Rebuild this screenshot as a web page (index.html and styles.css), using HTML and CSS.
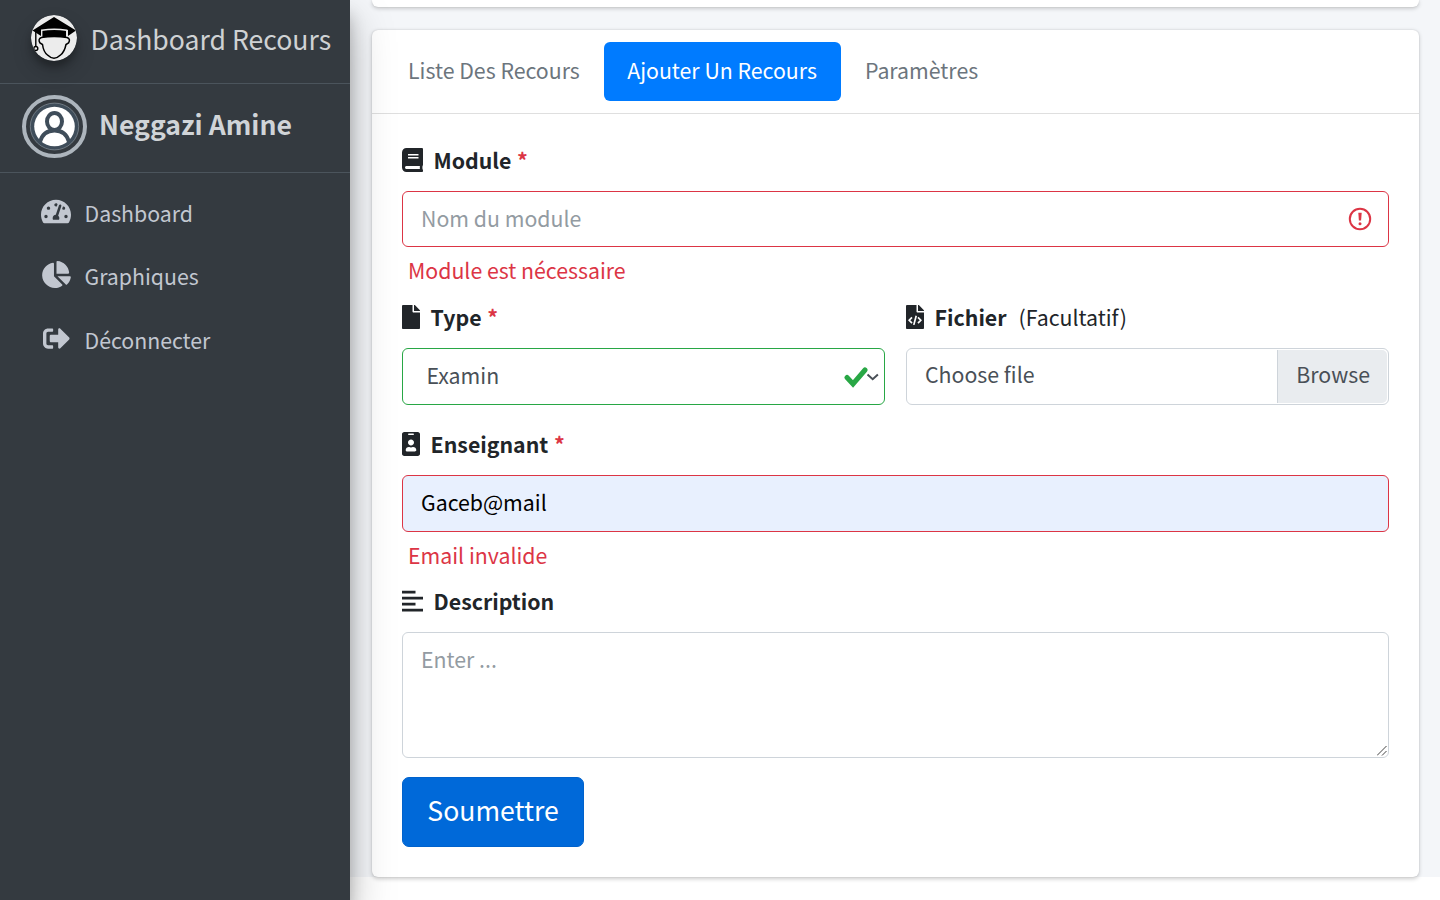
FILE: index.html
```html
<!DOCTYPE html>
<html lang="fr">
<head>
<meta charset="utf-8">
<title>Dashboard Recours</title>
<link rel="stylesheet" href="styles.css">
</head>
<body>
<aside class="sidebar">
  <a class="brand">
    <svg class="brand-logo" viewBox="0 0 46 46">
      <defs><clipPath id="disc"><circle cx="23" cy="23" r="23"/></clipPath></defs>
      <circle cx="23" cy="23" r="23" fill="#ececec"/>
      <g clip-path="url(#disc)">
        <path d="M1.500 15.500L23 2l22 13.500-8 5.500V15H10v6z" fill="#000"/>
        <path d="M10.700 22.500v-7.300q12.500-2 25 0v7.300" fill="#000" stroke="#ececec" stroke-width="1.400"/>
        <path d="M4.800 17v14" fill="none" stroke="#000" stroke-width="1.400"/>
        <circle cx="4.800" cy="33.500" r="2" fill="none" stroke="#000" stroke-width="1.400"/>
        <path d="M10.500 22.500Q6.500 24 9 28l2.500 1.500Q12.500 37 16.500 40q3.500 3.300 6.500 3.300t6.500-3.300q4-3 5.500-10.500l2.500-1.500q2.500-4-1.500-5.500Q23 20.500 10.500 22.500z" fill="#ececec" stroke="#000" stroke-width="1.500"/>
      </g>
    </svg>
    <span class="brand-text">Dashboard Recours</span>
  </a>
  <div class="user">
    <svg class="avatar" viewBox="0 0 65 63">
      <ellipse cx="32.500" cy="31.500" rx="30.500" ry="29.500" fill="none" stroke="#adb5bd" stroke-width="4"/>
      <ellipse cx="32.500" cy="31.500" rx="24.200" ry="23.400" fill="#3f4d5a" stroke="#87909a" stroke-width=".7"/>
      <ellipse cx="32.500" cy="31.500" rx="20.300" ry="19.700" fill="#fff"/>
      <path d="M18 47q3-11.500 14.500-11.500T47 47" fill="none" stroke="#3f4d5a" stroke-width="3.800"/>
      <ellipse cx="32.500" cy="26.500" rx="7.500" ry="8.500" fill="#fff" stroke="#3f4d5a" stroke-width="4"/>
    </svg>
    <span class="user-name">Neggazi Amine</span>
  </div>
  <nav class="menu">
    <a class="menu-item"><span class="menu-icon"><svg width="30" height="27" viewBox="0 0 576 512"><path d="M288 32C128.940 32 0 160.940 0 320c0 52.800 14.250 102.260 39.060 144.800 5.610 9.620 16.300 15.200 27.440 15.200h443c11.140 0 21.830-5.580 27.440-15.200C561.750 422.260 576 372.800 576 320c0-159.060-128.940-288-288-288zm0 64c14.710 0 26.580 10.130 30.320 23.650-1.110 2.260-2.640 4.230-3.450 6.670l-9.220 27.670c-5.130 3.490-10.970 6.010-17.640 6.010-17.670 0-32-14.330-32-32S270.330 96 288 96zM96 384c-17.670 0-32-14.330-32-32s14.330-32 32-32 32 14.330 32 32-14.330 32-32 32zm48-160c-17.670 0-32-14.330-32-32s14.330-32 32-32 32 14.330 32 32-14.330 32-32 32zm246.770-72.410l-61.330 184C343.130 347.330 352 364.540 352 384c0 11.720-3.380 22.550-8.880 32H232.880c-5.500-9.450-8.880-20.280-8.880-32 0-33.940 26.500-61.430 59.900-63.590l61.340-184.010c4.170-12.560 17.730-19.450 30.360-15.170 12.570 4.190 19.350 17.790 15.170 30.360zm14.660 57.200l15.520-46.550c3.470-1.290 7.130-2.230 11.050-2.230 17.670 0 32 14.330 32 32s-14.330 32-32 32c-11.380-.01-20.890-6.280-26.570-15.220zM480 384c-17.670 0-32-14.330-32-32s14.330-32 32-32 32 14.330 32 32-14.330 32-32 32z"/></svg></span>Dashboard</a>
    <a class="menu-item"><span class="menu-icon"><svg width="29" height="27" viewBox="0 0 544 512"><path d="M527.790 288H290.500l158.030 158.030c6.040 6.040 15.980 6.530 22.190.68 38.700-36.460 65.320-85.610 73.130-140.860 1.340-9.460-6.510-17.850-16.060-17.850zm-15.830-64.800C503.720 103.740 408.260 8.280 288.800.04 279.680-.59 272 7.100 272 16.240V240h223.770c9.140 0 16.820-7.680 16.190-16.800zM224 288V50.710c0-9.550-8.390-17.400-17.840-16.060C86.990 51.490-4.100 155.600.14 280.370 4.500 408.510 114.830 513.590 243.030 511.980c50.400-.63 96.970-16.870 135.260-44.030 7.900-5.600 8.420-17.230 1.570-24.080L224 288z"/></svg></span>Graphiques</a>
    <a class="menu-item"><span class="menu-icon"><svg width="27" height="27" viewBox="0 0 512 512"><path d="M497 273L329 441c-15 15-41 4.500-41-17v-96H152c-13.300 0-24-10.700-24-24v-96c0-13.300 10.700-24 24-24h136V88c0-21.400 25.900-32 41-17l168 168c9.300 9.400 9.300 24.600 0 34zM192 436v-40c0-6.600-5.400-12-12-12H96c-17.700 0-32-14.300-32-32V160c0-17.700 14.300-32 32-32h84c6.600 0 12-5.400 12-12V76c0-6.600-5.400-12-12-12H96c-53 0-96 43-96 96v192c0 53 43 96 96 96h84c6.600 0 12-5.400 12-12z"/></svg></span>Déconnecter</a>
  </nav>
</aside>
<main class="content">
  <section class="card card-previous"></section>
  <section class="card card-main">
    <nav class="tabs">
      <a class="tab">Liste Des Recours</a>
      <a class="tab tab-active">Ajouter Un Recours</a>
      <a class="tab">Paramètres</a>
    </nav>
    <form class="form">
      <label class="label"><svg class="i-wide" viewBox="0 0 448 512"><path d="M448 360V24c0-13.300-10.700-24-24-24H96C43 0 0 43 0 96v320c0 53 43 96 96 96h328c13.300 0 24-10.700 24-24v-16c0-7.500-3.500-14.300-8.900-18.700-4.200-15.400-4.200-59.300 0-74.700 5.400-4.300 8.900-11.100 8.900-18.600zM128 134c0-3.300 2.700-6 6-6h212c3.300 0 6 2.700 6 6v20c0 3.300-2.700 6-6 6H134c-3.300 0-6-2.700-6-6v-20zm0 64c0-3.300 2.700-6 6-6h212c3.300 0 6 2.700 6 6v20c0 3.300-2.700 6-6 6H134c-3.300 0-6-2.700-6-6v-20zm253.400 250H96c-17.700 0-32-14.300-32-32 0-17.600 14.400-32 32-32h285.400c-1.900 17.100-1.900 46.900 0 64z"/></svg><b>Module</b><b class="star">*</b></label>
      <div class="control invalid control-module">
        <input class="field" type="text" placeholder="Nom du module">
        <svg class="alert" viewBox="0 0 24 24"><circle cx="12" cy="12" r="10.200" fill="none" stroke="#dc3545" stroke-width="2"/><path d="M10.300 5.800h3.400l-.6 7.600h-2.200z" fill="#dc3545"/><circle cx="12" cy="16.700" r="1.500" fill="#dc3545"/></svg>
      </div>
      <p class="error">Module est nécessaire</p>
      <div class="row">
        <div class="col">
          <label class="label"><svg class="i-slim" viewBox="0 0 384 512"><path d="M224 136V0H24C10.700 0 0 10.700 0 24v464c0 13.300 10.700 24 24 24h336c13.300 0 24-10.700 24-24V160H248c-13.200 0-24-10.800-24-24zm160-14.100v6.100H256V0h6.100c6.400 0 12.500 2.500 17 7l97.900 98c4.500 4.500 7 10.600 7 16.900z"/></svg><b>Type</b><b class="star">*</b></label>
          <div class="control valid select">
            <span class="select-value">Examin</span>
            <svg class="marks" viewBox="0 0 36 24"><path d="M3 12.500l6 6.500L21 5" fill="none" stroke="#28a745" stroke-width="5" stroke-linecap="round"/><path d="M23.500 9.500l5.200 4.700 5.200-4.700" fill="none" stroke="#495057" stroke-width="2"/></svg>
          </div>
        </div>
        <div class="col">
          <label class="label"><svg class="i-slim" viewBox="0 0 384 512"><path d="M224 136V0H24C10.700 0 0 10.700 0 24v464c0 13.300 10.700 24 24 24h336c13.300 0 24-10.700 24-24V160H248c-13.200 0-24-10.800-24-24zm160-14.100v6.100H256V0h6.100c6.400 0 12.500 2.500 17 7l97.900 98c4.500 4.500 7 10.600 7 16.900z"/><path d="M128 264l-60 62 60 62M256 264l60 62-60 62M218 228l-52 196" fill="none" stroke="#fff" stroke-width="36"/></svg><b>Fichier</b><span class="optional">(Facultatif)</span></label>
          <div class="control file"><span class="file-name">Choose file</span><span class="browse">Browse</span></div>
        </div>
      </div>
      <label class="label"><svg class="i-slim" viewBox="0 0 384 512"><path d="M336 0H48C21.500 0 0 21.500 0 48v416c0 26.500 21.500 48 48 48h288c26.500 0 48-21.500 48-48V48c0-26.500-21.500-48-48-48zM144 32h96c8.800 0 16 7.200 16 16s-7.200 16-16 16h-96c-8.800 0-16-7.200-16-16s7.200-16 16-16zm48 128c35.300 0 64 28.700 64 64s-28.700 64-64 64-64-28.700-64-64 28.700-64 64-64zm112 236.800c0 10.600-10 19.200-22.400 19.200H102.400C90 416 80 407.400 80 396.800v-19.200c0-31.800 30.100-57.600 67.200-57.600h5c12.300 5.100 25.700 8 39.800 8s27.600-2.900 39.800-8h5c37.100 0 67.200 25.800 67.200 57.600v19.200z"/></svg><b>Enseignant</b><b class="star">*</b></label>
      <div class="control invalid autofilled"><input class="field" type="text" value="Gaceb@mail"></div>
      <p class="error error-mail">Email invalide</p>
      <label class="label"><svg class="i-wide" viewBox="0 0 448 512"><path d="M0 36h288v60H0zM0 164h448v60H0zM0 292h288v60H0zM0 420h448v60H0z"/></svg><b>Description</b></label>
      <div class="description-box">
        <textarea class="description" placeholder="Enter ..."></textarea>
        <svg class="grip" viewBox="0 0 10 10"><path d="M0 9.500L9.500 0M5 9.500L9.500 5" fill="none" stroke="#444" stroke-width="1"/></svg>
      </div>
      <button class="submit" type="button">Soumettre</button>
    </form>
  </section>
</main>
</body>
</html>
```

FILE: styles.css
```css
* { box-sizing: border-box; }
body {
  margin: 0;
  height: 900px;
  overflow: hidden;
  display: flex;
  align-items: flex-start;
  background: #fff;
  color: #212529;
  font: 400 21.3px/36px "Noto Sans CJK SC", "Noto Sans", sans-serif;
}
.sidebar {
  position: relative;
  z-index: 2;
  flex: 0 0 350px;
  height: 900px;
  background: #343a40;
  color: #c2c7d0;
  box-shadow: 0 21px 42px rgba(0,0,0,.25), 0 15px 15px rgba(0,0,0,.22);
}
.brand {
  display: flex;
  align-items: center;
  height: 84px;
  padding: 0 0 7px 31px;
  border-bottom: 1px solid #4b545c;
}
.brand-logo {
  width: 46px;
  height: 46px;
  margin-right: 13.500px;
  border-radius: 50%;
  box-shadow: 0 10px 20px rgba(0,0,0,.19), 0 6px 6px rgba(0,0,0,.23);
}
.brand-text { padding-top: 1px; font-size: 26.600px; color: #cfd2d4; white-space: nowrap; }
.user {
  display: flex;
  height: 89px;
  padding: 11px 0 0 22px;
  border-bottom: 1px solid #4b545c;
}
.avatar { width: 65px; height: 63px; margin-right: 12px; }
.user-name { padding-top: 11px; font-size: 26.600px; font-weight: 700; color: #d0d4d8; white-space: nowrap; }
.menu { display: flex; flex-direction: column; gap: 3.400px; padding-top: 10px; }
.menu-item { display: flex; align-items: center; height: 60px; padding-left: 38.500px; }
.menu-icon { display: flex; justify-content: center; width: 35px; margin: -3px 11px 0 0; fill: #c2c7d0; }
.content {
  flex: 1;
  height: 877px;
  padding: 0 21px 0 22px;
  background: #f4f6f9;
}
.card { background: #fff; box-shadow: 0 0 1.500px rgba(0,0,0,.125), 0 1.500px 4px rgba(0,0,0,.2); }
.card-previous { height: 7px; margin-bottom: 23px; border-radius: 0 0 6px 6px; }
.card-main { height: 847px; border-radius: 6px; }
.tabs { display: flex; height: 84px; padding: 12px; border-bottom: 1px solid #dfdfdf; }
.tab { height: 59px; padding: 10px 24px; border-radius: 6px; color: #6c757d; white-space: nowrap; }
.tab-active { padding: 10px 24px 10px 23.400px; background: #007bff; color: #fff; }
.form { padding: 29px 30px 30px; }
.label { display: flex; align-items: center; height: 36px; margin-bottom: 12px; }
.label svg { height: 24px; margin: -2px 10.600px 0 0; fill: #212529; }
.label b, .optional { margin-top: -2px; }
.i-wide { width: 21px; }
.i-slim { width: 18px; }
.label .star { margin-left: 5.600px; color: #dc3545; }
.optional { margin-left: 12px; }
.control {
  display: flex;
  align-items: center;
  height: 57px;
  border: 1px solid #ced4da;
  border-radius: 6px;
  overflow: hidden;
  color: #495057;
}
.control-module { height: 56px; }
.invalid { border-color: #dc3545; }
.valid { border-color: #28a745; }
.field {
  flex: 1;
  height: 100%;
  padding: 0 18px 3px;
  border: 0;
  outline: 0;
  background: transparent;
  color: inherit;
  font: inherit;
}
::placeholder { color: #939ba2; opacity: 1; }
.alert { width: 24px; height: 24px; margin-right: 16px; }
.error { margin: 5px 6px 12px; color: #dc3545; }
.error-mail { margin-bottom: 11px; }
.row { display: grid; grid-template-columns: 483px 483px; gap: 21px; margin-bottom: 22px; }
.select { padding: 0 4px 0 23.400px; justify-content: space-between; }
.select-value { padding-bottom: 4px; }
.marks { width: 36px; height: 24px; }
.file { padding: 1px; justify-content: space-between; }
.file-name { padding: 0 0 6px 17px; }
.browse {
  height: 53px;
  padding: 6px 17px 6px 18px;
  border-left: 1px solid #ced4da;
  border-radius: 0 5px 5px 0;
  background: #e9ecef;
}
.autofilled { background: #e8f0fe; color: #000; }
.autofilled .field { padding-bottom: 5px; }
.description-box { position: relative; margin-bottom: 19px; }
.description {
  display: block;
  width: 100%;
  height: 126px;
  padding: 8px 18px;
  border: 1px solid #ced4da;
  border-radius: 6px;
  outline: 0;
  font: inherit;
  resize: none;
}
.grip { position: absolute; right: 2px; bottom: 2px; width: 10px; height: 10px; }
.submit {
  display: block;
  width: 182px;
  height: 70px;
  padding: 0 0 5px;
  border: 1px solid #0062cc;
  border-radius: 7px;
  background: #0069d9;
  color: #fff;
  font: inherit;
  font-size: 26.600px;
}
```
